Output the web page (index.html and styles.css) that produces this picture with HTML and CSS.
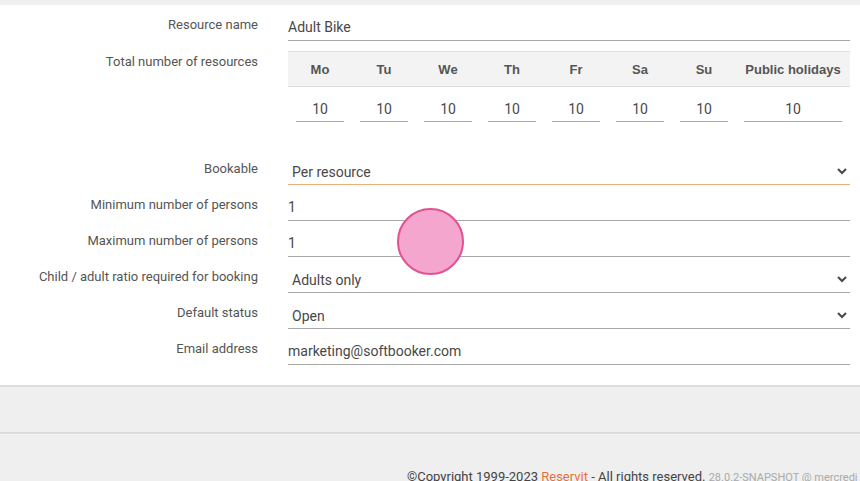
FILE: index.html
```html
<!DOCTYPE html>
<html lang="en">
<head>
    <meta charset="UTF-8">
    <title>Resource settings</title>
    <link rel="stylesheet" href="styles.css">
</head>
<body>

    <div class="panel">
        <div class="row row-first">
            <label class="label">Resource name</label>
            <div class="field"><input type="text" class="text" value="Adult Bike"></div>
        </div>

        <div class="row row-table">
            <label class="label">Total number of resources</label>
            <div class="field">
                <table class="days">
                    <thead>
                        <tr>
                            <th>Mo</th><th>Tu</th><th>We</th><th>Th</th><th>Fr</th><th>Sa</th><th>Su</th>
                            <th class="holidays">Public holidays</th>
                        </tr>
                    </thead>
                    <tbody>
                        <tr>
                            <td><input type="text" value="10"></td>
                            <td><input type="text" value="10"></td>
                            <td><input type="text" value="10"></td>
                            <td><input type="text" value="10"></td>
                            <td><input type="text" value="10"></td>
                            <td><input type="text" value="10"></td>
                            <td><input type="text" value="10"></td>
                            <td><input type="text" value="10"></td>
                        </tr>
                    </tbody>
                </table>
            </div>
        </div>

        <div class="row">
            <label class="label">Bookable</label>
            <div class="field">
                <select class="select focused">
                    <option>Per resource</option>
                </select>
            </div>
        </div>

        <div class="row">
            <label class="label">Minimum number of persons</label>
            <div class="field"><input type="text" class="text" value="1"></div>
        </div>

        <div class="row">
            <label class="label">Maximum number of persons</label>
            <div class="field"><input type="text" class="text" value="1"></div>
        </div>

        <div class="row">
            <label class="label">Child / adult ratio required for booking</label>
            <div class="field">
                <select class="select">
                    <option>Adults only</option>
                </select>
            </div>
        </div>

        <div class="row">
            <label class="label">Default status</label>
            <div class="field">
                <select class="select">
                    <option>Open</option>
                </select>
            </div>
        </div>

        <div class="row">
            <label class="label">Email address</label>
            <div class="field"><input type="text" class="text" value="marketing@softbooker.com"></div>
        </div>
    </div>

    <div class="actions"></div>

    <div class="footer">
        ©Copyright 1999-2023 <a href="#">Reservit</a> - All rights reserved.
        <span class="version">28.0.2-SNAPSHOT @ mercredi 5 avril 2023</span>
    </div>

    <div class="touch"></div>

</body>
</html>
```

FILE: styles.css
```css
body {
    margin: 0;
    padding-top: 5px;
    background-color: #efefef;
    font-family: Roboto, "Liberation Sans", Arial, sans-serif;
    overflow: hidden;
}
.panel {
    background-color: #fff;
    border-bottom: 2px solid #dcdcdc;
    padding: 9px 10px 20px 0;
}
.row {
    display: flex;
    gap: 30px;
    margin-bottom: 9px;
}
.row:last-child {
    margin-bottom: 0;
}
.row-first {
    margin-bottom: 10px;
}
.row-table {
    margin-bottom: 28px;
}
.label {
    width: 258px;
    flex-shrink: 0;
    text-align: right;
    font-size: 13px;
    line-height: 18px;
    padding-top: 2px;
    color: #555;
}
.field {
    flex: 1;
}
.text,
.select {
    display: block;
    width: 100%;
    box-sizing: border-box;
    height: 27px;
    padding: 0;
    border: none;
    border-bottom: 1px solid #a8a8a8;
    font-family: inherit;
    font-size: 14px;
    color: #484848;
    background: transparent;
    outline: none;
}
.select {
    padding-top: 2px;
}
.select.focused {
    border-bottom-color: #e8b27a;
}
.days {
    width: 100%;
    border-collapse: collapse;
    table-layout: fixed;
}
.days th {
    width: 64px;
    height: 34px;
    background-color: #f3f3f3;
    border-top: 1px solid #dedede;
    border-bottom: 1px solid #dedede;
    font-family: "Liberation Sans", Arial, sans-serif;
    font-size: 13px;
    font-weight: bold;
    color: #555;
    padding: 0;
}
.days th.holidays {
    width: auto;
}
.days td {
    padding: 9px 8px 8px;
}
.days td input {
    display: block;
    width: 100%;
    box-sizing: border-box;
    height: 26px;
    padding: 0;
    border: none;
    border-bottom: 1px solid #a8a8a8;
    text-align: center;
    font-family: inherit;
    font-size: 14px;
    color: #484848;
    outline: none;
}
.actions {
    height: 45px;
    border-bottom: 2px solid #dcdcdc;
}
.footer {
    padding: 34px 0 0 407px;
    white-space: nowrap;
    font-size: 13px;
    color: #444;
    border-top: 1px solid #f6f6f6;
}
.footer a {
    color: #e8703a;
    text-decoration: none;
}
.version {
    font-size: 11px;
    color: #aaa;
}
.touch {
    position: absolute;
    left: 397px;
    top: 208px;
    width: 63px;
    height: 63px;
    border-radius: 50%;
    background-color: #f5a6cf;
    border: 2px solid #e2528f;
}
```
